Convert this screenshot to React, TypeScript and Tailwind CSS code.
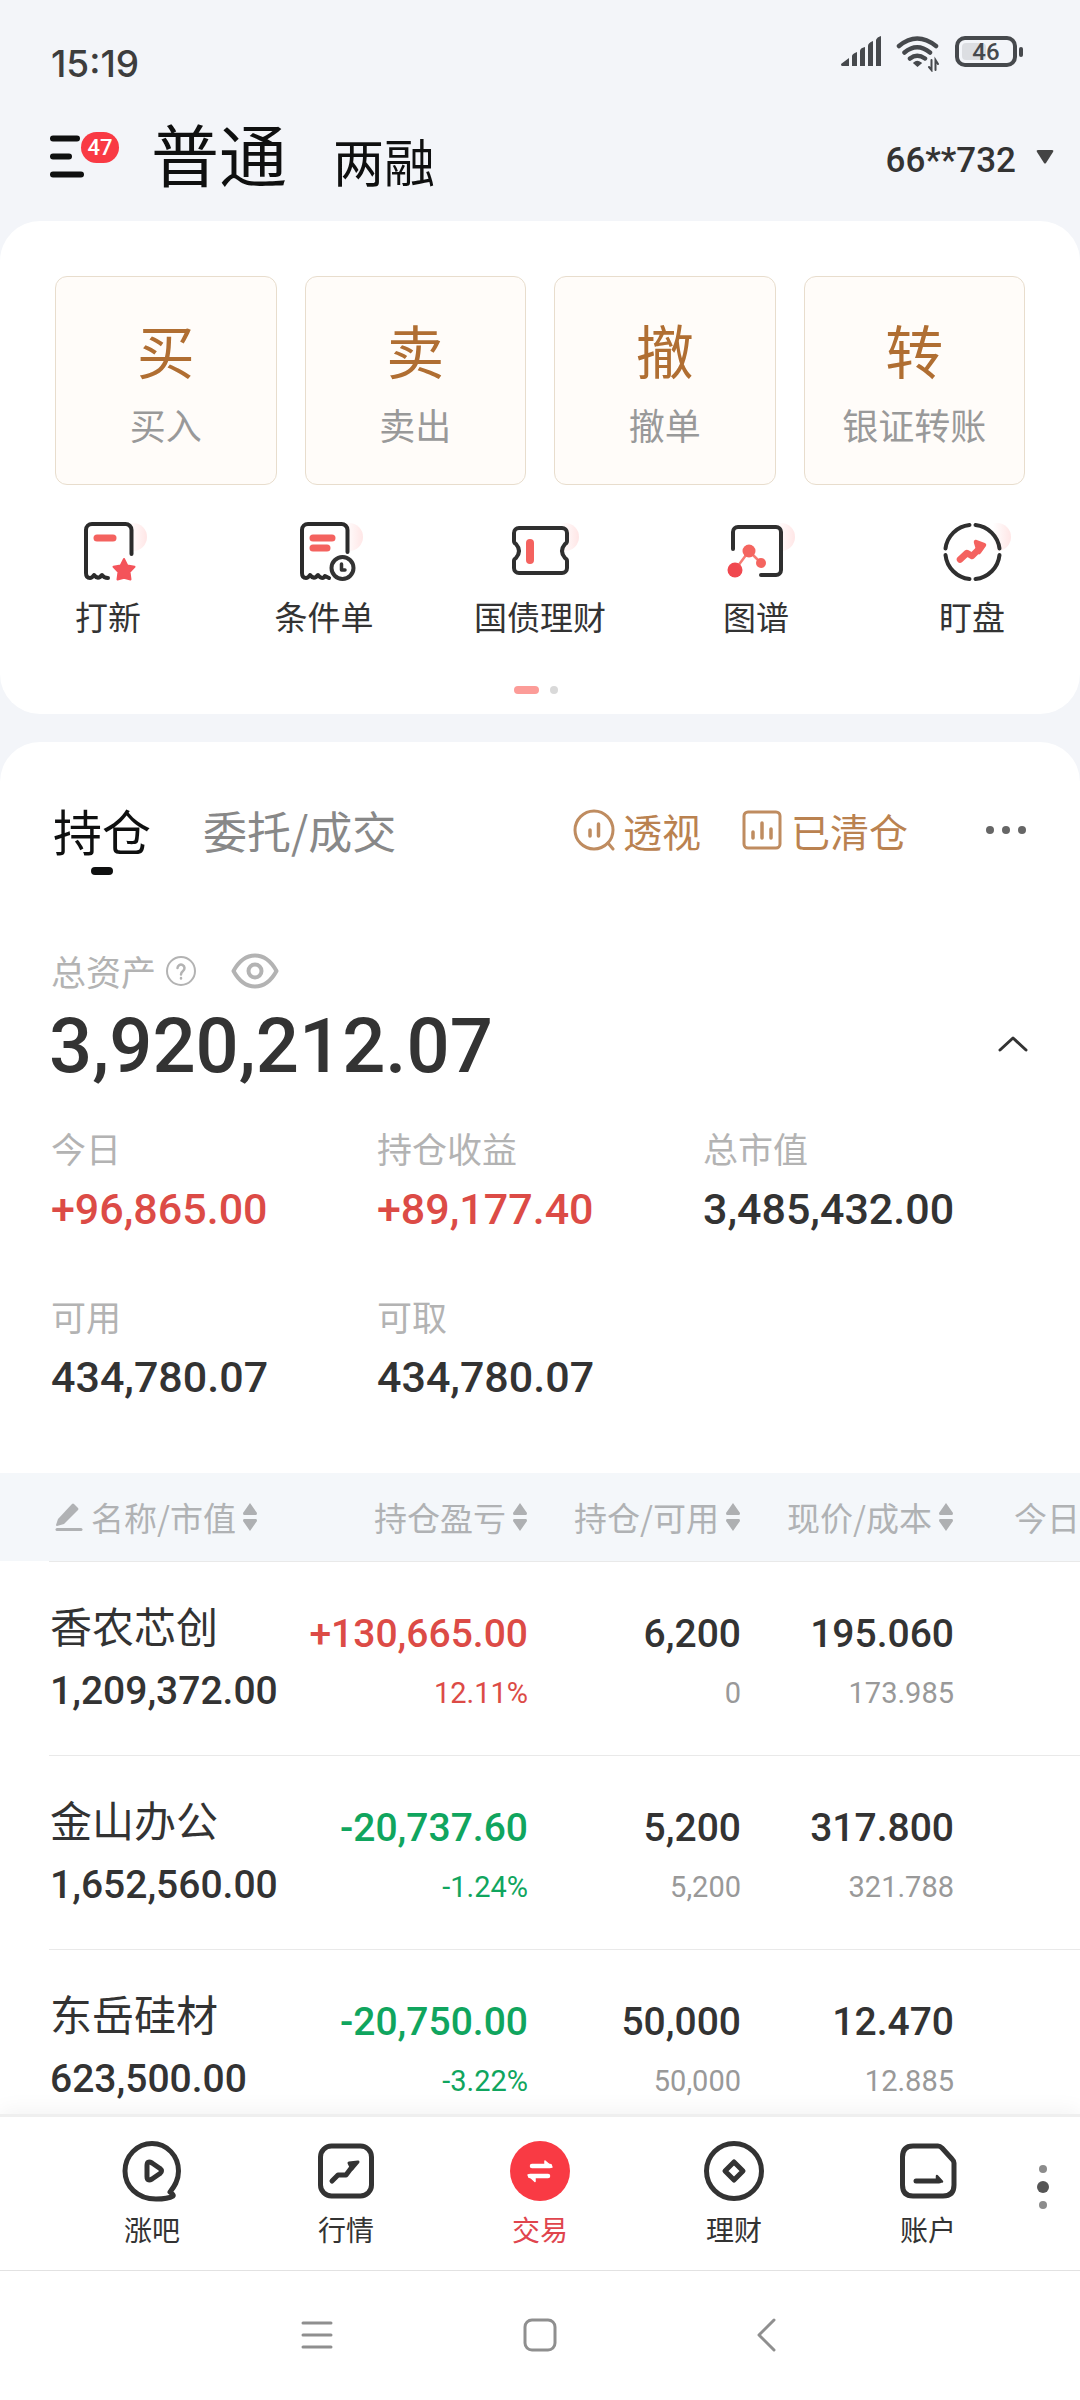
import type { ReactNode } from "react";

const NUM = "font-[Roboto,'Noto_Sans_CJK_SC',sans-serif] font-medium";
const ROW_LINE = "relative after:absolute after:top-0 after:right-0 after:h-px after:bg-[#e9e9e9]";

const trades = [
  { mark: "买", label: "买入" },
  { mark: "卖", label: "卖出" },
  { mark: "撤", label: "撤单" },
  { mark: "转", label: "银证转账" },
];

const stats = [
  { label: "今日", value: "+96,865.00", up: true },
  { label: "持仓收益", value: "+89,177.40", up: true },
  { label: "总市值", value: "3,485,432.00", up: false },
  { label: "可用", value: "434,780.07", up: false },
  { label: "可取", value: "434,780.07", up: false },
];

const holdings = [
  { name: "香农芯创", value: "1,209,372.00", pnl: "+130,665.00", pct: "12.11%", up: true, qty: "6,200", usable: "0", price: "195.060", cost: "173.985" },
  { name: "金山办公", value: "1,652,560.00", pnl: "-20,737.60", pct: "-1.24%", up: false, qty: "5,200", usable: "5,200", price: "317.800", cost: "321.788" },
  { name: "东岳硅材", value: "623,500.00", pnl: "-20,750.00", pct: "-3.22%", up: false, qty: "50,000", usable: "50,000", price: "12.470", cost: "12.885" },
];

function ToolIcon({ id, children }: { id: string; children: ReactNode }) {
  return (
    <svg viewBox="0 0 80 64" className="h-16 w-20" fill="none" strokeLinecap="round" strokeLinejoin="round" aria-hidden="true">
      <defs>
        <linearGradient id={`${id}-blob`} x1="0" x2="1">
          <stop offset="0.35" stopColor="#ffe6e6" stopOpacity="0" />
          <stop offset="1" stopColor="#ffe6e6" />
        </linearGradient>
        <linearGradient id={`${id}-red`} gradientUnits="userSpaceOnUse" x1="20" y1="45" x2="60" y2="15">
          <stop offset="0" stopColor="#f0484f" />
          <stop offset="1" stopColor="#f99384" />
        </linearGradient>
      </defs>
      <circle cx="65" cy="17" r="14" fill={`url(#${id}-blob)`} />
      {children}
    </svg>
  );
}

const tools = [
  {
    label: "打新",
    icon: (
      <ToolIcon id="ipo">
        <path d="M63.500 34V10a6 6 0 0 0-6-6H24a6 6 0 0 0-6 6v43q0 5 4 5 2 0 4-3 3 4 6 2l2-2q2 3 6 3" stroke="#2b2b2b" strokeWidth="4" />
        <path d="M29 18H45" stroke="#f4625f" strokeWidth="7" />
        <path d="M56 39l3.400 6.600 7.100 1.200-5 5.200 1 7.500-6.500-1.800-6.500 1.800 1-7.500-5-5.200 7.100-1.200z" fill="#f4535a" stroke="#f4535a" strokeWidth="2" />
      </ToolIcon>
    ),
  },
  {
    label: "条件单",
    icon: (
      <ToolIcon id="cond">
        <path d="M63.500 32V10a6 6 0 0 0-6-6H24a6 6 0 0 0-6 6v43q0 5 4 5 2 0 4-3 3 4 6 2l2-2q2 3 5 3 1 0 2-2l4 2" stroke="#2b2b2b" strokeWidth="4" />
        <path d="M29 18H48M29 28H43" stroke="#f4625f" strokeWidth="7" />
        <circle cx="58.500" cy="48" r="11" stroke="#333" strokeWidth="4" />
        <path d="M57.500 44V50H61" stroke="#333" strokeWidth="3.500" />
      </ToolIcon>
    ),
  },
  {
    label: "国债理财",
    icon: (
      <ToolIcon id="bond">
        <path d="M19 8H62a5 5 0 0 1 5 5V21q0 2-2 3-6 7 0 14 2 1 2 3V48a5 5 0 0 1-5 5H19a5 5 0 0 1-5-5V41q0-2 2-3 6-7 0-14-2-1-2-3V13a5 5 0 0 1 5-5z" fill="#fff" fillOpacity="0.600" stroke="#2f2f2f" strokeWidth="4" />
        <path d="M30 23V40" stroke="#f4625f" strokeWidth="8" />
      </ToolIcon>
    ),
  },
  {
    label: "图谱",
    icon: (
      <ToolIcon id="graph">
        <path d="M17 29V12a5 5 0 0 1 5-5H60a5 5 0 0 1 5 5V50a5 5 0 0 1-5 5H45" stroke="#2f2f2f" strokeWidth="4" />
        <path d="M19 50L33 31L45 43" stroke="#f67c73" strokeWidth="2.500" />
        <circle cx="33" cy="31" r="6.500" fill="#f4655f" />
        <circle cx="19" cy="50" r="7.500" fill="url(#graph-red)" />
        <circle cx="45" cy="43" r="5" fill="#f4655f" />
      </ToolIcon>
    ),
  },
  {
    label: "盯盘",
    icon: (
      <ToolIcon id="watch">
        <path d="M13.500 28.500A27 27 0 0 1 37.500 5M43.500 5A27 27 0 0 1 67.500 28.500M67.500 35A27 27 0 0 1 43.500 59M37.500 59A27 27 0 0 1 13.500 35" stroke="#2f2f2f" strokeWidth="4" />
        <path d="M28 39.500L35 33L40 36L48 28" stroke="#f4625f" strokeWidth="6.500" />
        <path d="M44 22L52 25L47 32z" fill="#f4625f" stroke="#f4625f" strokeWidth="4.500" />
      </ToolIcon>
    ),
  },
];

const tabs = [
  {
    label: "涨吧",
    icon: (
      <>
        <path d="M50 53C54 48 58.500 42 58.500 32C58.500 17 47 4.500 32 4.500S5 17 5 32S17 60 36 60Q48 60 53 57Q54 56 50 53z" />
        <path d="M27 26.500Q27 21 32 24L40 29.500Q43 32 40 34.500L32 40Q27 43 27 37.500z" />
      </>
    ),
  },
  {
    label: "行情",
    icon: (
      <>
        <rect x="6.500" y="7" width="51" height="50" rx="11" />
        <path d="M18 42L24 36H32L38 28" />
        <path d="M35 24L44 23L38 30z" strokeWidth="3" fill="#333" />
      </>
    ),
  },
  {
    label: "交易",
    active: true,
    icon: (
      <>
        <circle cx="32" cy="32" r="30" fill="#f93a44" stroke="none" />
        <path d="M24 27H42" stroke="#fff" strokeWidth="4.500" />
        <path d="M37 22L44 28H37z" fill="#fff" stroke="#fff" strokeWidth="1.500" />
        <path d="M40 37H22" stroke="#fff" strokeWidth="4.500" />
        <path d="M27 42.500L20 36H27z" fill="#fff" stroke="#fff" strokeWidth="1.500" />
      </>
    ),
  },
  {
    label: "理财",
    icon: (
      <>
        <circle cx="32" cy="32" r="27.500" />
        <path d="M32 23L41 32L32 41L23 32z" />
      </>
    ),
  },
  {
    label: "账户",
    icon: (
      <>
        <path d="M17 7H42Q44 7 46 9L56 20Q58 22 58 24V46Q58 57 47 57H17Q6.500 57 6.500 46V18Q6.500 7 17 7z" />
        <path d="M20 42H43" />
        <path d="M41 37L46 42.500H41z" strokeWidth="2.500" fill="#333" />
      </>
    ),
  },
];

function SortIcon() {
  return (
    <svg viewBox="0 0 16 28" className="h-7 w-4 shrink-0" fill="#aeb0b2" aria-hidden="true">
      <path d="M8 0L15 10Q15 12 14 12H2Q1 12 1 10zM8 28L15 18Q15 16 14 16H2Q1 16 1 18z" />
    </svg>
  );
}

function Pair({ top, bottom, tone, sub }: { top: string; bottom: string; tone: string; sub: string }) {
  return (
    <td className={`p-0 pt-[45px] text-right align-top after:left-0 ${ROW_LINE} ${NUM}`}>
      <div className={`text-[39px] leading-[56px] ${tone}`}>{top}</div>
      <div className={`mt-[9px] text-[29px] leading-[44px] font-normal ${sub}`}>{bottom}</div>
    </td>
  );
}

export default function App() {
  return (
    <div className="flex h-screen flex-col overflow-hidden bg-[#f3f5f9] font-['Noto_Sans_CJK_SC',sans-serif] text-[#333]">
      <div className="flex h-[108px] shrink-0 items-start justify-between pr-[57px] pl-[51px]">
        <time className="pt-[42px] font-[Inter,sans-serif] text-[37px] leading-[44px] font-medium text-[#3d3d3d]">15:19</time>
        <div className="flex items-start pt-[36px] text-[#46494d]">
          <svg viewBox="0 0 42 31" className="h-[31px] w-[42px]" fill="currentColor" aria-label="信号">
            <path d="M1 30Q0 30 0 28L8 22V30zM11 20Q11 18 16 16V30H11zM19 15Q19 12 24 11V30H19zM27 10Q27 7 32 5V30H27zM35 4Q36 1 40 0V30H35z" />
          </svg>
          <svg viewBox="0 0 44 36" className="ml-[13px] h-9 w-11" fill="none" stroke="currentColor" strokeWidth="4.500" strokeLinecap="round" aria-label="无线网络">
            <path d="M3 10Q21-5 40 10M8.500 16.500Q21 6 34 16.500M14 22.500Q21 17 29 22.500" />
            <path d="M18 27Q21 24 25 27L21.500 30z" fill="currentColor" strokeWidth="1.500" />
            <path d="M35.500 24V34L33 31M39.500 34V24L42 28" strokeWidth="2" />
          </svg>
          <div className="ml-[15px] flex items-center">
            <div className="relative flex h-[31px] w-[62px] items-center justify-center rounded-[10px] border-4 border-current">
              <div className="absolute top-[3px] left-[3px] h-[17px] w-6 rounded-sm bg-[#dcdee2]" />
              <span className={`relative text-[24px] leading-none ${NUM}`}>46</span>
            </div>
            <div className="ml-0.5 h-2.5 w-1 rounded-sm bg-current" />
          </div>
        </div>
      </div>

      <header className="flex h-[113px] shrink-0 items-start pr-[26px] pl-[49px] text-[#0f1010]">
        <button aria-label="菜单" className="relative h-[60px] w-[76px]">
          <svg viewBox="0 0 36 44" className="absolute top-[27px] left-0 h-11 w-9" stroke="currentColor" strokeWidth="6" strokeLinecap="round" aria-hidden="true">
            <path d="M4 3.500H28M4 21.500H20M4 39.500H32" />
          </svg>
          <span className={`absolute top-[24px] left-8 flex h-[31px] w-[38px] items-center justify-center rounded-full bg-[#f93a44] text-[22px] leading-none text-white ${NUM}`}>47</span>
        </button>
        <nav className="ml-[26px] flex items-baseline gap-[46px]">
          <a href="#normal" className="text-[68px] leading-[90px]">普通</a>
          <a href="#margin" className="text-[51px] leading-[90px]">两融</a>
        </nav>
        <button className={`mt-[33px] ml-auto flex items-center text-[35px] leading-[40px] text-[#333] ${NUM}`}>
          66**732
          <svg viewBox="0 0 18 14" className="mb-2 ml-[20px] h-3.5 w-[18px]" fill="#444" aria-hidden="true">
            <path d="M2 0H16Q18 0 17 2L10 13Q9 14 8 13L1 2Q0 0 2 0z" />
          </svg>
        </button>
      </header>

      <main className="min-h-0 flex-1 overflow-y-auto [scrollbar-width:none]">
        <section className="rounded-[40px] bg-white pt-[55px] pb-[20px]">
          <div className="grid grid-cols-4 gap-7 px-[55px]">
            {trades.map((t) => (
              <button key={t.mark} className="flex h-[209px] flex-col items-center rounded-xl border border-[#e8ddcd] bg-[#fffcf9] pt-[35px]">
                <span className="text-[58px] leading-[74px] text-[#b06e32]">{t.mark}</span>
                <span className="mt-[11px] text-[36px] leading-[54px] text-[#999]">{t.label}</span>
              </button>
            ))}
          </div>
          <div className="mt-[35px] grid grid-cols-5">
            {tools.map((t) => (
              <button key={t.label} className="flex flex-col items-center">
                {t.icon}
                <span className="mt-[8px] text-[33px] leading-[48px]">{t.label}</span>
              </button>
            ))}
          </div>
          <div className="mt-[46px] flex items-center justify-center gap-[11px] pr-2">
            <span className="h-2 w-[25px] rounded-full bg-[#fc9c98]" />
            <span className="size-2 rounded-full bg-[#d9d9d9]" />
          </div>
        </section>

        <section className="mt-7 rounded-t-[40px] bg-white">
          <div className="flex items-center pt-[54px] pr-[54px] pl-[53px]">
            <button className="relative text-[49px] leading-[68px] text-[#0f1010]">
              持仓
              <span className="absolute -bottom-[11px] left-1/2 h-2 w-[22px] -translate-x-1/2 rounded-full bg-[#0f1010]" />
            </button>
            <button className="ml-[52px] text-[44px] leading-[68px] text-[#888]">委托/成交</button>
            <button className="ml-auto flex items-center text-[39px] leading-[68px] text-[#ba8250]">
              <svg viewBox="0 0 42 42" className="mr-[8px] size-[42px]" fill="none" stroke="#bf8c60" strokeWidth="3" strokeLinecap="round" aria-hidden="true">
                <circle cx="21" cy="21" r="19" />
                <path d="M35 34L40 40" />
                <path d="M17 21V27M25.500 15V27" strokeWidth="3.500" />
              </svg>
              透视
            </button>
            <button className="ml-[41px] flex items-center text-[39px] leading-[68px] text-[#ba8250]">
              <svg viewBox="0 0 40 40" className="mr-[9px] size-10" fill="none" stroke="#bf8c60" strokeWidth="3" strokeLinecap="round" aria-hidden="true">
                <rect x="2" y="2" width="36" height="36" rx="4" />
                <path d="M11 22V28M20 13V28M29 19V28" strokeWidth="3.500" />
              </svg>
              已清仓
            </button>
            <button aria-label="更多" className="ml-[78px] flex h-[68px] items-center gap-2">
              <span className="size-2 rounded-full bg-[#666]" />
              <span className="size-2 rounded-full bg-[#666]" />
              <span className="size-2 rounded-full bg-[#666]" />
            </button>
          </div>

          <div className="mt-[80px] flex items-center px-[51px] text-[35px] leading-[54px] text-[#b3b3b3]">
            总资产
            <svg viewBox="0 0 32 32" className="ml-[9px] size-8" fill="none" stroke="currentColor" strokeWidth="2" strokeLinecap="round" strokeLinejoin="round" role="img" aria-label="说明">
              <circle cx="16" cy="16" r="14" />
              <path d="M12.500 13a3.500 3.500 0 1 1 5.500 3q-2 1.500-2 3.500M16 23V23.500" strokeWidth="2.500" />
            </svg>
            <button aria-label="隐藏金额" className="ml-[34px]">
              <svg viewBox="0 0 48 36" className="h-9 w-12" fill="none" stroke="#b3b3b3" strokeWidth="4" strokeLinejoin="round" aria-hidden="true">
                <path d="M2.500 18Q11 2.500 24 2.500T45.500 18Q37 33.500 24 33.500T2.500 18z" />
                <circle cx="24" cy="18" r="6.500" />
              </svg>
            </button>
          </div>
          <div className="flex items-center justify-between pr-[51px] pl-[49px]">
            <strong className={`text-[76px] leading-[96px] ${NUM}`}>3,920,212.07</strong>
            <button aria-label="收起" className="mb-1">
              <svg viewBox="0 0 32 18" className="h-[18px] w-8" fill="none" stroke="#333" strokeWidth="3" strokeLinecap="round" strokeLinejoin="round" aria-hidden="true">
                <path d="M3 15L16 3L29 15" />
              </svg>
            </button>
          </div>

          <dl className="mt-[27px] grid grid-cols-3 gap-y-[50px] pr-[51px] pb-[66px] pl-[51px]">
            {stats.map((s) => (
              <div key={s.label}>
                <dt className="text-[35px] leading-[54px] text-[#b3b3b3]">{s.label}</dt>
                <dd className={`mt-[4px] text-[43px] leading-[60px] ${NUM} ${s.up ? "text-[#dc4b46]" : "text-[#333]"}`}>{s.value}</dd>
              </div>
            ))}
          </dl>

          <table className="w-full table-fixed border-collapse">
            <colgroup>
              <col className="w-[304px]" />
              <col className="w-[224px]" />
              <col className="w-[213px]" />
              <col className="w-[213px]" />
              <col />
            </colgroup>
            <thead>
              <tr className="h-[88px] bg-[#f4f7fa] text-[33px] leading-[48px] whitespace-nowrap text-[#b0b2b4]">
                <th className="p-0 pl-[53px] font-normal">
                  <button className="flex items-center gap-[6px]">
                    <svg viewBox="0 0 32 32" className="size-8" aria-hidden="true">
                      <path d="M5 18L19 3Q20 2 21 3L25 7Q26 8 25 9L11 23L4 25Q3 25 3 24z" fill="#b0b2b4" />
                      <path d="M4 28.500H28" stroke="#b0b2b4" strokeWidth="3" strokeLinecap="round" />
                    </svg>
                    名称/市值
                    <SortIcon />
                  </button>
                </th>
                {["持仓盈亏", "持仓/可用", "现价/成本"].map((h) => (
                  <th key={h} className="p-0 font-normal">
                    <button className="ml-auto flex items-center gap-[6px]">
                      {h}
                      <SortIcon />
                    </button>
                  </th>
                ))}
                <th className="p-0 text-right font-normal">今日</th>
              </tr>
            </thead>
            <tbody>
              {holdings.map((r) => (
                <tr key={r.name} className="h-[194px]">
                  <td className={`p-0 pt-[36px] pl-[50px] align-top whitespace-nowrap after:left-[49px] ${ROW_LINE}`}>
                    <div className="text-[42px] leading-[56px]">{r.name}</div>
                    <div className={`mt-[10px] text-[39px] leading-[56px] ${NUM}`}>{r.value}</div>
                  </td>
                  <Pair top={r.pnl} bottom={r.pct} tone={r.up ? "text-[#dc4b46]" : "text-[#10a55e]"} sub={r.up ? "text-[#dc4b46]" : "text-[#10a55e]"} />
                  <Pair top={r.qty} bottom={r.usable} tone="text-[#333]" sub="text-[#999]" />
                  <Pair top={r.price} bottom={r.cost} tone="text-[#333]" sub="text-[#999]" />
                  <td className={`p-0 after:left-0 ${ROW_LINE}`} />
                </tr>
              ))}
            </tbody>
          </table>
        </section>
      </main>

      <footer className="relative shrink-0 border-t-[3px] border-[#efefef] bg-white shadow-[0_-4px_20px_rgba(0,0,0,0.05)]">
        <nav className="grid h-[154px] grid-cols-5 border-b border-[#e2e2e2] px-[55px]">
          {tabs.map((t) => (
            <a key={t.label} href={`#${t.label}`} className={`flex flex-col items-center pt-[22px] ${t.active ? "text-[#e0454d]" : "text-[#333]"}`}>
              <svg viewBox="0 0 64 64" className="size-16" fill="none" stroke="#333" strokeWidth="5" strokeLinecap="round" strokeLinejoin="round" aria-hidden="true">
                {t.icon}
              </svg>
              <span className="mt-[6px] text-[28px] leading-[40px]">{t.label}</span>
            </a>
          ))}
        </nav>
        <button aria-label="切换面板" className="absolute top-[48px] right-[31px] flex flex-col items-center gap-2">
          <span className="size-2 rounded-full bg-[#8c8c8c]" />
          <span className="size-3 rounded-full bg-[#555]" />
          <span className="size-2 rounded-full bg-[#8c8c8c]" />
        </button>
        <div className="flex h-[127px] items-center justify-center gap-[190px]">
          <button aria-label="最近任务">
            <svg viewBox="0 0 34 34" className="size-[34px]" fill="none" stroke="#8f8f8f" strokeWidth="3" strokeLinecap="round" aria-hidden="true">
              <path d="M4 5H32M4 17H32M4 29H32" />
            </svg>
          </button>
          <button aria-label="主屏幕">
            <svg viewBox="0 0 34 34" className="size-[34px]" fill="none" stroke="#8f8f8f" strokeWidth="3" aria-hidden="true">
              <rect x="2" y="2" width="30" height="30" rx="7" />
            </svg>
          </button>
          <button aria-label="返回">
            <svg viewBox="0 0 34 34" className="size-[34px]" fill="none" stroke="#8f8f8f" strokeWidth="3" strokeLinecap="round" strokeLinejoin="round" aria-hidden="true">
              <path d="M27 2L12 17L27 32" />
            </svg>
          </button>
        </div>
        <div className="h-0.5" />
      </footer>
    </div>
  );
}
